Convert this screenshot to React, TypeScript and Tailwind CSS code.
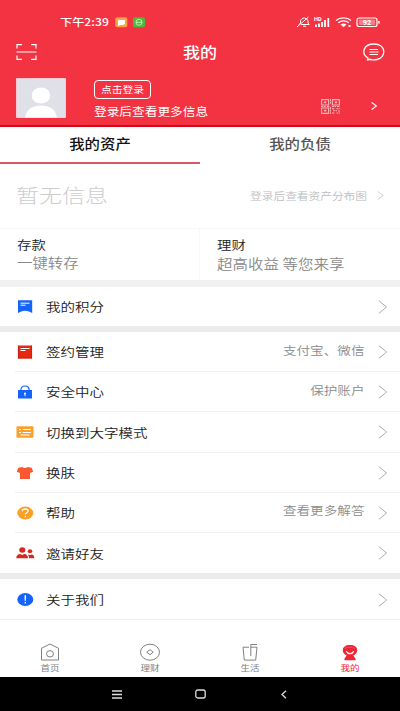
import type { ReactNode } from "react";
import clsx from "clsx";

type TextProps = {
  children: ReactNode;
  className?: string;
};

// The display font is a little wider than it is tall
function Text({ children, className }: TextProps) {
  return (
    <span
      className={clsx(
        "block scale-y-[.86] leading-none whitespace-nowrap",
        className
      )}
    >
      {children}
    </span>
  );
}

function Chevron({ className }: { className?: string }) {
  return (
    <svg
      viewBox="0 0 10 14"
      preserveAspectRatio="none"
      fill="none"
      stroke="currentColor"
      className={clsx("shrink-0", className)}
    >
      <path d="M1 .7 9 7 1 13.3" />
    </svg>
  );
}

const icons = {
  points: (
    <svg viewBox="0 0 18 16" className="h-4 w-[18px]">
      <path d="M2 1.200h14.200v12.800L13.500 12.700q-4.400-2-8.800 0L2 14z" fill="#1463fb" />
      <path d="M4.500 4.200h9M4.500 6.200h5" stroke="#fff" strokeWidth="1" />
    </svg>
  ),
  sign: (
    <svg viewBox="0 0 18 16" className="h-4 w-[18px]">
      <path d="M2 1.500h14v13H2z" fill="#e4290f" />
      <path d="M2 14h14M2.400 1.500v13M15.600 1.500v13" stroke="#c91d14" strokeWidth=".8" />
      <path d="M4.500 4.500h9M4.500 6.500h5" stroke="#fff" strokeWidth="1" />
    </svg>
  ),
  security: (
    <svg viewBox="0 0 18 16" className="h-4 w-[18px]">
      <path d="M4.800 6.500C4.800 3.500 6.500 2 9 2s4.200 1.500 4.200 4.500" fill="none" stroke="#1463fb" strokeWidth="1.200" />
      <path d="M2 6h14v8.500H2z" fill="#1463fb" />
      <circle cx="9" cy="9.600" r="1" fill="#fff" />
      <path d="M9 9.500v2.800" stroke="#fff" strokeWidth=".9" />
    </svg>
  ),
  largeText: (
    <svg viewBox="0 0 18 16" className="h-4 w-[18px]">
      <rect x=".5" y="2.200" width="17" height="11.600" rx="1" fill="#fba12b" />
      <path d="M3 5.500h2M6.500 5.500H15M3 8.500h2M6.500 8.500H15M4.500 11h9" stroke="#fff" strokeWidth="1" />
    </svg>
  ),
  skin: (
    <svg viewBox="0 0 18 16" className="h-4 w-[18px]">
      <path d="M6.300 2q2.700 2 5.400 0l4 .8 1.500 4-3.200 1.100V14H4V7.900L.8 6.800l1.500-4z" fill="#fd572f" />
    </svg>
  ),
  help: (
    <svg viewBox="0 0 18 16" className="h-4 w-[18px]">
      <ellipse cx="9.300" cy="8" rx="8" ry="6.500" fill="#fba024" />
      <path d="M6.300 6.300C6.300 4.700 7.400 4 9.200 4s2.900.8 2.900 2.100C12.100 7.700 9.300 7.700 9.300 9.500" fill="none" stroke="#fff" strokeWidth="1.300" />
      <path d="M8.600 10.900H10v1.200H8.600z" fill="#fff" />
    </svg>
  ),
  invite: (
    <svg viewBox="0 0 18 16" className="h-4 w-[18px] overflow-visible" fill="#d42b20">
      <ellipse cx="6.300" cy="5" rx="3.100" ry="2.700" />
      <path d="M.3 13.300c0-2.800 1.500-4 3.800-4.200l2.100.8 2.100-.8c2.200.2 3.700 1.400 3.700 4.200z" />
      <ellipse cx="14" cy="6.300" rx="2.300" ry="2" />
      <path d="M11.600 9.500l2.400.5 2-.5c1.500.3 2.300 1.500 2.300 3.800h-5.300c0-1.600-.4-2.700-1.400-3.800z" />
    </svg>
  ),
  about: (
    <svg viewBox="0 0 18 16" className="h-4 w-[18px]">
      <ellipse cx="9.300" cy="7.500" rx="8" ry="6.500" fill="#1463fb" />
      <path d="M9.300 3.300v5.500M9.300 10.100v1.400" stroke="#fff" strokeWidth="1.400" />
    </svg>
  ),
};

const services = [
  { label: "签约管理", icon: icons.sign, hint: "支付宝、微信" },
  { label: "安全中心", icon: icons.security, hint: "保护账户" },
  { label: "切换到大字模式", icon: icons.largeText },
  { label: "换肤", icon: icons.skin },
  { label: "帮助", icon: icons.help, hint: "查看更多解答" },
  { label: "邀请好友", icon: icons.invite },
];

type RowProps = {
  label: string;
  icon: ReactNode;
  hint?: string;
};

function Row({ label, icon, hint }: RowProps) {
  return (
    <div className="flex h-full items-center pt-px pr-[13px] pl-4">
      {icon}
      <Text className="ml-3 pt-px text-[14.5px] font-[350] text-[#222]">
        {label}
      </Text>
      <div className="ml-auto flex items-center">
        {hint && (
          <Text className="mb-[3px] text-[13.6px] font-[350] text-[#8c8c8c]">
            {hint}
          </Text>
        )}
        <Chevron className="ml-[13px] h-3.5 w-[9.500px] text-[#aaa]" />
      </div>
    </div>
  );
}

function StatusBar() {
  return (
    <div className="flex h-[14px] items-center pr-[18px] pl-[60px] text-white">
      <Text className="w-[49px] pt-px text-[12.2px] font-medium">
        下午2:39
      </Text>
      <svg viewBox="0 0 31 11" className="ml-[6px] h-[11px] w-[31px]">
        <rect x=".3" y=".3" width="12" height="10" rx="2" fill="#fba443" />
        <path d="M3 3h7v4L8 8H5L3 9z" fill="#fff" />
        <rect x="18" y=".3" width="12" height="10" rx="2" fill="#4dba39" />
        <ellipse cx="24" cy="5.300" rx="3" ry="3" fill="none" stroke="#d6f3cf" strokeWidth=".8" />
        <path d="M21 5.300h6" stroke="#d6f3cf" strokeWidth=".9" />
      </svg>
      <svg
        viewBox="0 0 86 14"
        fill="none"
        stroke="currentColor"
        className="ml-auto h-[14px] w-[86px]"
      >
        <path d="M3 9.500 4.500 8V6c.5-2 2-3 4-3l2 .8 1.500 2V8l1.200 1.500H5M7 11.200h3M1 12 12.500 2" strokeWidth="1" />
        <text x="18" y="5.500" fontSize="5.500" fontWeight="bold" fill="currentColor" stroke="none" fontFamily="Roboto, sans-serif">HD</text>
        <path d="M20 9.500V12M23 8.500V12M26 7V12M29 5V12M32.300 3V12" strokeWidth="1.800" />
        <path d="M40 5.500c4-3.500 11-3.500 15 0M42.300 7.800c3-2.500 7.500-2.500 10.500 0" strokeWidth="1.300" />
        <path d="M44.500 9.500c2-1.500 4.200-1.500 6 0l-3 2.800zM52.500 10h2v2h-2z" fill="currentColor" stroke="none" />
        <rect x="61" y="3" width="20" height="8.500" rx="2" strokeWidth="1.200" />
        <rect x="62.800" y="4.600" width="16.400" height="5.300" rx=".7" fill="#fff" fillOpacity=".35" stroke="none" />
        <text x="71" y="10" fontSize="7.500" fontWeight="bold" textAnchor="middle" fill="currentColor" stroke="none" fontFamily="Roboto, sans-serif">92</text>
        <path d="M83 6v2.500" strokeWidth="1.500" />
      </svg>
    </div>
  );
}

function Header() {
  return (
    <header className="h-[127px] border-b-2 border-[#d4071b] bg-[#f33342] pt-[15px] text-white">
      <StatusBar />
      <div className="mt-[11px] flex h-6 items-center justify-between pr-[15px] pl-4">
        <svg viewBox="0 0 21 16" fill="none" stroke="currentColor" className="h-4 w-[21px]" strokeWidth="1.200">
          <path d="M1 4.500V.600h5M15 .600h5v4M1 11.500v3.900h5M15 15.400h5v-4M.5 8h20" />
        </svg>
        <Text className="mb-[2px] text-[17px] font-medium">我的</Text>
        <svg viewBox="0 0 22 18" fill="none" stroke="currentColor" className="h-[18px] w-[22px]">
          <path d="M5 15C-2 11 0 1 11 1c12 0 13 13 3 15.500-2.300.6-4.500.5-6.500-.2l-3 .7z" strokeWidth="1.300" />
          <path d="M6.500 6.500H15M6.500 9h9M6.500 11.500H15" strokeWidth="1" />
        </svg>
      </div>
      <div className="mt-[14px] flex h-10 pr-[23px] pl-4">
        <svg viewBox="0 0 50 40" className="h-10 w-[50px]">
          <path d="M.5.500h49v39H.500z" fill="#dfe0e8" stroke="#f5c9cf" />
          <ellipse cx="25" cy="17.500" rx="9.300" ry="8" fill="#fff" />
          <path d="M9 39.500c1.500-8 7-12 16-12s14.500 4 16 12z" fill="#fff" />
        </svg>
        <div className="ml-7 pt-[2px]">
          <div className="flex h-[19px] w-[57px] items-center justify-center rounded border border-white">
            <Text className="text-[10.8px]">点击登录</Text>
          </div>
          <Text className="mt-[7px] text-[12.7px]">登录后查看更多信息</Text>
        </div>
        <div className="mt-4 ml-auto flex h-6 items-center">
          <svg viewBox="0 0 19 15" className="h-[15px] w-[19px] text-[#fbb2b8]" fill="none" stroke="currentColor">
            <path d="M.6.600h7v5.400h-7zM11.400.600h7v5.400h-7zM.6 9h7v5.400h-7z" strokeWidth="1.100" />
            <path d="M3 3.300h2.300M13.800 3.300h2.300M3 11.700h2.300" strokeWidth="1.800" />
            <path d="M9.500 0v5M0 7.500h5M6 7.500h3M9.500 8v7M11 7.500h4M16 7.500h3M11 9.700h3M15.500 9.700H19M12 11.700h4M17 12h2M11 14h3M15.500 14H19" strokeDasharray="2 .6" />
          </svg>
          <Chevron className="ml-[31px] h-[8px] w-[6px] stroke-2" />
        </div>
      </div>
    </header>
  );
}

const tabs = [
  {
    label: "首页",
    icon: <path d="M1.500 5.300 10 1l8.500 4.300V17h-17zM6.500 10.800a3.500 3.200 0 1 0 7 0a3.500 3.200 0 1 0-7 0" />,
  },
  {
    label: "理财",
    icon: <path d="M.5 9.200a9.500 8 0 1 0 19 0a9.500 8 0 1 0-19 0M10 6.700l3.200 2.500-3.200 2.500-3.200-2.500z" />,
  },
  {
    label: "生活",
    icon: <path d="M9 4.200H3l1.300 12.900h11.400L17 4.200h-2.800M10.800 13V1.500H17M10.800 4.200h3.400" />,
  },
  {
    label: "我的",
    active: true,
    icon: (
      <>
        <path d="M6.700 12.400C4 11.300 2.800 9.500 2.800 7.300 2.800 4 5.500 2 10 2s7.200 2 7.200 5.300c0 2.200-1.200 4-3.900 5.100l2.300 3.300v1.600H4.400v-1.600z" fill="#ed2636" stroke="none" />
        <path d="M4.800 5.500C7 3.700 13 3.700 15.200 5.500" stroke="#f66b77" strokeWidth=".6" />
        <path d="M6.300 8.200c1.500 3.300 5.900 3.300 7.400 0" stroke="#fff" strokeWidth="1.300" />
      </>
    ),
  },
];

function BottomTabs() {
  return (
    <nav className="grid h-[58px] grid-cols-4 border-t border-[#eee] bg-white">
      {tabs.map((tab) => (
        <div
          key={tab.label}
          className={clsx(
            "flex flex-col items-center pt-[23px]",
            tab.active ? "text-[#ed2636]" : "text-[#808080]"
          )}
        >
          <svg viewBox="0 0 20 18" fill="none" stroke="currentColor" className="h-[18px] w-5" strokeWidth="1">
            {tab.icon}
          </svg>
          <Text className="mt-[2px] text-[9.500px]">{tab.label}</Text>
        </div>
      ))}
    </nav>
  );
}

function App() {
  return (
    <div className="flex h-[711px] w-[400px] flex-col overflow-hidden bg-white font-['Noto_Sans_CJK_SC',sans-serif]">
      <Header />

      <div className="grid h-[37px] grid-cols-2 text-[15.4px] font-medium">
        <div className="flex justify-center border-b-2 border-[#d65b66] pt-[8px] text-[#111]">
          <Text>我的资产</Text>
        </div>
        <div className="flex justify-center pt-[8px] text-[#555]">
          <Text>我的负债</Text>
        </div>
      </div>

      <div className="flex h-[64px] items-center justify-between pr-4 pl-4">
        <Text className="mb-[3px] text-[23px] font-light text-[#cdcdcd]">
          暂无信息
        </Text>
        <div className="flex items-center">
          <Text className="text-[11.7px] font-[350] text-[#bebebe]">
            登录后查看资产分布图
          </Text>
          <Chevron className="ml-2.5 h-[9px] w-[7px] text-[#bbb]" />
        </div>
      </div>

      <div className="grid h-[52px] grid-cols-2 border-t border-[#f8f8f8]">
        <div className="border-r border-[#f8f8f8] pt-[9px] pl-[17px]">
          <Text className="text-[14.4px] font-[350] text-[#222]">存款</Text>
          <Text className="mt-[3px] text-[15.4px] font-[350] text-[#888]">
            一键转存
          </Text>
        </div>
        <div className="pt-[9px] pl-[17px]">
          <Text className="text-[14.4px] font-[350] text-[#222]">理财</Text>
          <Text className="mt-[4px] text-[15.5px] font-[350] text-[#888]">
            超高收益 等您来享
          </Text>
        </div>
      </div>

      <div className="h-[7px] bg-[#f1f1f1]" />
      <div className="h-[39px]">
        <Row label="我的积分" icon={icons.points} />
      </div>
      <div className="h-[6px] bg-[#ebebeb]" />

      <div className="grid h-[241px] grid-rows-6">
        {services.map((item, idx) => (
          <div key={item.label} className="flex flex-col">
            <div className="min-h-0 flex-1">
              <Row {...item} />
            </div>
            {idx < services.length - 1 && (
              <div className="ml-[15px] h-px bg-[#f0f0f0]" />
            )}
          </div>
        ))}
      </div>

      <div className="h-[6px] bg-[#ebebeb]" />
      <div className="h-10">
        <Row label="关于我们" icon={icons.about} />
      </div>

      <BottomTabs />

      <div className="flex h-[34px] items-center justify-center bg-black text-[#ddd]">
        <svg viewBox="0 0 10 9" stroke="currentColor" className="h-[9px] w-[10px]" strokeWidth="1.500">
          <path d="M0 1h10M0 4.500h10M0 8h10" />
        </svg>
        <svg viewBox="0 0 11 10" fill="none" stroke="currentColor" className="mx-[73px] h-[10px] w-[11px]" strokeWidth="1.300">
          <rect x=".8" y="1" width="9.400" height="8" rx="2" />
        </svg>
        <svg viewBox="0 0 10 9" fill="none" stroke="currentColor" className="h-[9px] w-[10px]" strokeWidth="1.300">
          <path d="M7 .8 3 4.500 7 8.200" />
        </svg>
      </div>
    </div>
  );
}

export default App;
